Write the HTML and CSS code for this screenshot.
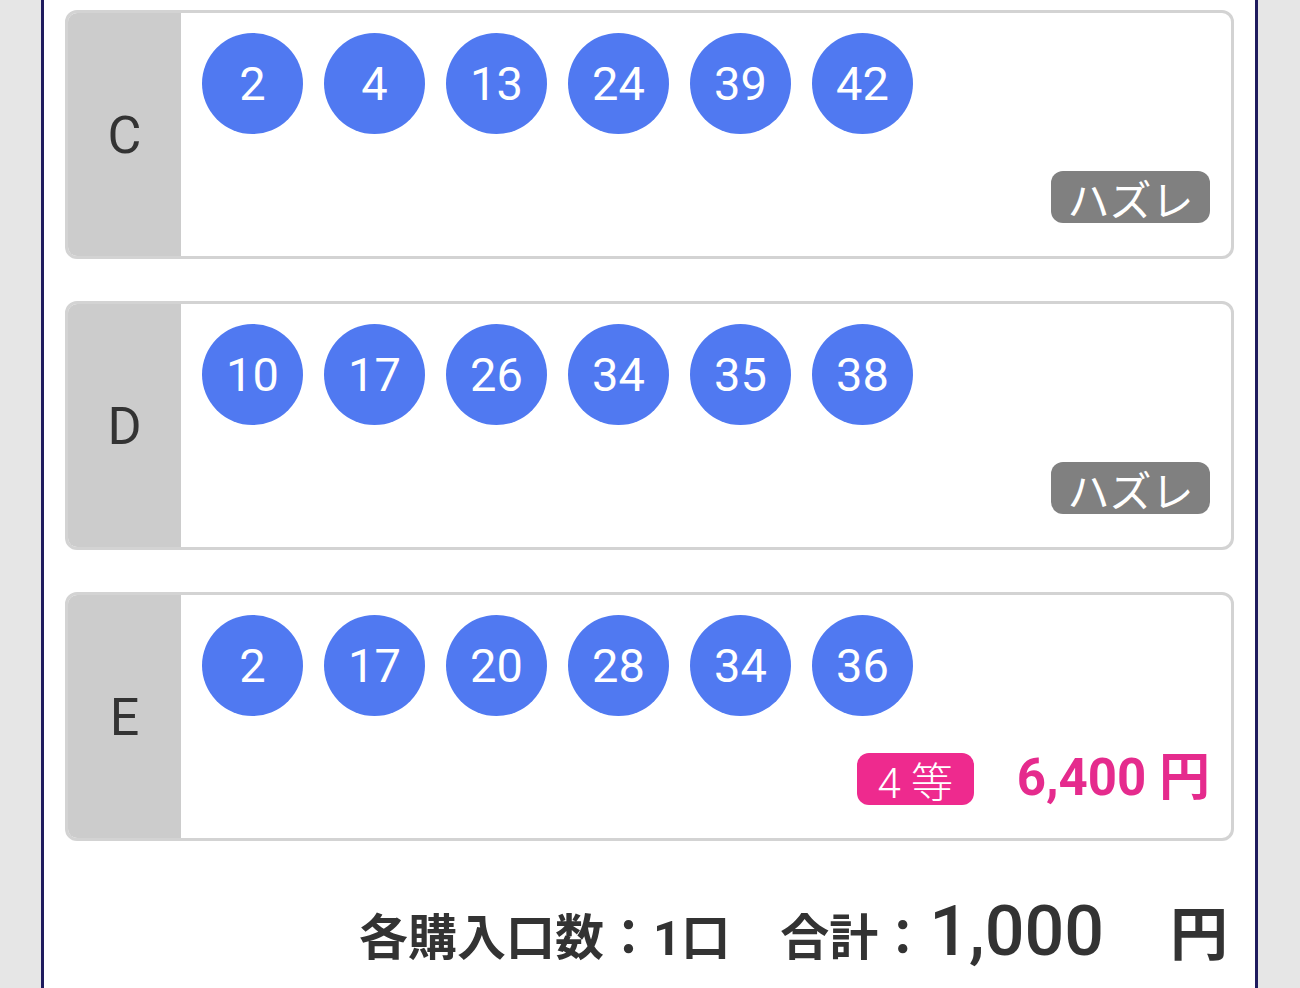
FILE: index.html
```html
<!DOCTYPE html>
<html lang="ja">
<head>
    <meta charset="UTF-8">
    <meta name="viewport" content="width=device-width, initial-scale=1.0">
    <title>ロト6 当せん確認</title>
    <link rel="stylesheet" href="styles.css">
</head>
<body>
    <div class="sheet">
        <div class="ticket">
            <div class="ticket-label">C</div>
            <div class="ticket-body">
                <div class="balls">
                    <span class="ball">2</span>
                    <span class="ball">4</span>
                    <span class="ball">13</span>
                    <span class="ball">24</span>
                    <span class="ball">39</span>
                    <span class="ball">42</span>
                </div>
                <div class="result">
                    <span class="badge lose">ハズレ</span>
                </div>
            </div>
        </div>

        <div class="ticket">
            <div class="ticket-label">D</div>
            <div class="ticket-body">
                <div class="balls">
                    <span class="ball">10</span>
                    <span class="ball">17</span>
                    <span class="ball">26</span>
                    <span class="ball">34</span>
                    <span class="ball">35</span>
                    <span class="ball">38</span>
                </div>
                <div class="result">
                    <span class="badge lose">ハズレ</span>
                </div>
            </div>
        </div>

        <div class="ticket">
            <div class="ticket-label">E</div>
            <div class="ticket-body">
                <div class="balls">
                    <span class="ball">2</span>
                    <span class="ball">17</span>
                    <span class="ball">20</span>
                    <span class="ball">28</span>
                    <span class="ball">34</span>
                    <span class="ball">36</span>
                </div>
                <div class="result">
                    <span class="badge win">4 等</span>
                    <span class="prize">6,400 円</span>
                </div>
            </div>
        </div>

        <div class="total">
            <span class="total-label">各購入口数：1口</span>
            <span class="total-label sum">合計：</span>
            <span class="total-amount">1,000</span>
            <span class="total-yen">円</span>
        </div>
    </div>
</body>
</html>
```

FILE: styles.css
```css
body {
    margin: 0;
    background: #e6e6e6;
    font-family: Roboto, "Noto Sans CJK JP", sans-serif;
    overflow: hidden;
}

.sheet {
    box-sizing: border-box;
    width: 1217px;
    min-height: 988px;
    margin-left: 41px;
    padding: 10px 21px 0;
    background: #fff;
    border-left: 3px solid #1f1b5e;
    border-right: 3px solid #1f1b5e;
}

.ticket {
    display: flex;
    box-sizing: border-box;
    height: 249px;
    margin-bottom: 42px;
    border: 3px solid #d3d3d3;
    border-radius: 12px;
    overflow: hidden;
}

.ticket-label {
    display: flex;
    justify-content: center;
    align-items: center;
    width: 113px;
    background: #cccccc;
    color: #333;
    font-size: 52px;
    padding-top: 2px;
}

.ticket-body {
    flex: 1;
    display: flex;
    flex-direction: column;
    justify-content: space-between;
    padding: 20px 21px 33px;
}

.balls {
    display: flex;
    gap: 21px;
}

.ball {
    display: flex;
    justify-content: center;
    align-items: center;
    width: 101px;
    height: 101px;
    border-radius: 50%;
    background: #5079f1;
    color: #fff;
    font-size: 47px;
}

.result {
    display: flex;
    justify-content: flex-end;
    align-items: center;
    gap: 43px;
}

.badge {
    display: flex;
    justify-content: center;
    align-items: center;
    height: 52px;
    border-radius: 12px;
    color: #fff;
    font-size: 42px;
}

.badge.lose {
    width: 159px;
    background: #808080;
}

.badge.win {
    width: 117px;
    background: #ee2a8e;
    font-weight: 300;
}

.prize {
    color: #e52b8d;
    font-size: 51px;
    font-weight: 700;
    line-height: 1;
    margin-top: -4px;
}

.total {
    display: flex;
    justify-content: flex-end;
    align-items: baseline;
    padding: 8px 6px 0 0;
    color: #333;
    line-height: 80px;
}

.total-label {
    font-size: 49px;
    font-weight: 700;
}

.total-label.sum {
    margin-left: 50px;
}

.total-amount {
    font-size: 70px;
    font-weight: 500;
    margin-left: 2px;
}

.total-yen {
    font-size: 58px;
    font-weight: 700;
    margin-left: 66px;
}
```
